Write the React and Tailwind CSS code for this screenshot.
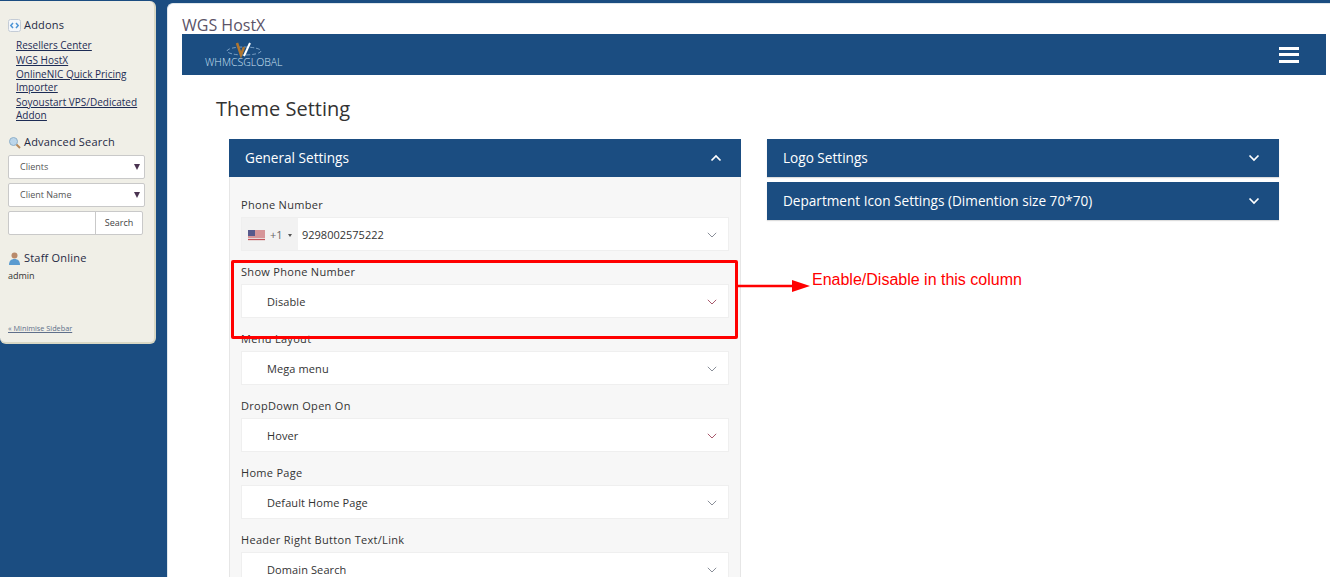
import React from "react";

const font = { fontFamily: '"Open Sans", sans-serif' };

function Chevron({ up, className }) {
  return (
    <svg width="12" height="8" viewBox="0 0 12 8" fill="none" className={className}>
      <path d={up ? "M1.5 6.5 6 2l4.500 4.500" : "M1.500 1.500 6 6l4.500-4.500"} stroke="currentColor" strokeWidth="1.700" />
    </svg>
  );
}

function Field({ label, value, red }) {
  return (
    <div className="flex flex-col shrink-0">
      <div className="h-[33px] flex items-end pb-[4px] text-[11px] leading-[16px] font-normal text-[#333] tracking-[0.3px]">{label}</div>
      <div className="h-[34px] bg-white border border-[#efefef] flex items-center pt-[2px] pl-[25px] pr-[11px] justify-between text-[11px] tracking-[0.1px] text-[#333]">
        <span>{value}</span>
        <svg width="10" height="6" viewBox="0 0 10 6" fill="none" className={red ? "text-[#a8596c]" : "text-[#8a8f99]"}>
          <path d="M.8.8 5 5 9.200.8" stroke="currentColor" strokeWidth="1" />
        </svg>
      </div>
    </div>
  );
}

function Flag() {
  return (
    <svg width="17" height="11" viewBox="0 0 17 11">
      <rect width="17" height="11" fill="#e8d8d8" />
      <path d="M0 1h17M0 3h17M0 5h17M0 7h17M0 9.500h17" stroke="#c4525a" strokeWidth="1" />
      <rect width="7" height="6" fill="#57598c" />
    </svg>
  );
}

function SideHeading({ icon, children }) {
  return (
    <div className="flex items-center gap-[3px] text-[11px] leading-[16px] text-[#1f2a44] font-normal tracking-[0.2px]">
      <span className="w-[13px] h-[13px] flex items-center justify-center shrink-0">{icon}</span>
      <span>{children}</span>
    </div>
  );
}

function SideSelect({ label }) {
  return (
    <div className="h-[24px] w-[137px] bg-white border border-[#c9c9c9] rounded-[2px] flex items-center justify-between pl-[11px] pr-[4px] text-[9px] text-[#555]">
      <span>{label}</span>
      <span className="w-0 h-0 border-l-[3px] border-r-[3px] border-t-[6px] border-l-transparent border-r-transparent border-t-[#4a3350]" />
    </div>
  );
}

export default function App() {
  return (
    <div style={font} className="relative h-[577px] w-[1330px] overflow-hidden bg-[#1b4d81] flex">
      <aside className="w-[167px] shrink-0 pt-[1px]">
        <div className="w-[156px] h-[343px] bg-[#f0efe7] border-r-[2px] border-b-[2px] border-[#d9d8c5] rounded-r-[6px] rounded-b-[6px] pl-[8px] pt-[16px] flex flex-col">
          <SideHeading
            icon={
              <svg width="13" height="13" viewBox="0 0 13 13">
                <rect x=".5" y=".5" width="12" height="12" rx="2" fill="#f4f7fb" stroke="#c4ccd6" />
                <path d="M5 4 2.800 6.500 5 9M8 4l2.200 2.500L8 9" stroke="#4b93d6" strokeWidth="1.500" fill="none" />
              </svg>
            }
          >
            Addons
          </SideHeading>
          <div className="pl-[8px] pt-[6px] text-[10px] leading-[13px] text-[#1d2c55] underline w-[138px] flex flex-col gap-[1px]">
            <a className="mb-[1px]">Resellers Center</a>
            <a>WGS HostX</a>
            <a className="mb-[1px]">OnlineNIC Quick Pricing Importer</a>
            <a>Soyoustart VPS/Dedicated Addon</a>
          </div>
          <div className="mt-[12px]">
            <SideHeading
              icon={
                <svg width="13" height="13" viewBox="0 0 13 13">
                  <circle cx="5.500" cy="5.500" r="4" fill="#bcd6ea" stroke="#8fb0c9" />
                  <path d="M8.500 8.500 12 12" stroke="#b8895a" strokeWidth="2" />
                </svg>
              }
            >
              Advanced Search
            </SideHeading>
          </div>
          <div className="mt-[5px] flex flex-col gap-[4px]">
            <SideSelect label="Clients" />
            <SideSelect label="Client Name" />
            <div className="h-[24px] w-[135px] flex bg-white border border-[#c9c9c9] rounded-[2px]">
              <div className="w-[87px] border-r border-[#c9c9c9]" />
              <div className="flex-1 flex items-center justify-center text-[9px] text-[#444]">Search</div>
            </div>
          </div>
          <div className="mt-[15px]">
            <SideHeading
              icon={
                <svg width="13" height="13" viewBox="0 0 13 13">
                  <circle cx="6.500" cy="3.500" r="3" fill="#b98a6b" />
                  <path d="M1 13c0-4 2-6 5.500-6S12 9 12 13z" fill="#5a9bd0" />
                </svg>
              }
            >
              Staff Online
            </SideHeading>
          </div>
          <div className="mt-[4px] text-[9px] leading-[12px] text-[#333]">admin</div>
          <div className="mt-auto mb-[9px] text-[7.300px] leading-[10px] text-[#5f6f8a] underline">« Minimise Sidebar</div>
        </div>
      </aside>

      <main className="flex-1 mt-[3px] bg-white rounded-tl-[6px] border-l border-t border-[#dfe7ec] pl-[14px] pr-[4px] flex flex-col min-w-0">
        <div className="h-[30px] shrink-0 flex items-end text-[16px] leading-[18px] text-[#5b5367]">WGS HostX</div>
        <div className="h-[41px] bg-[#1b4d81] flex items-center justify-between shrink-0 pl-[23px] pr-[27px]">
          <div className="relative w-[78px] h-[26px]">
            <svg width="78" height="18" viewBox="0 0 78 18" className="absolute left-0 top-0">
              <ellipse cx="39" cy="9" rx="17" ry="4" fill="none" stroke="#9fc0e0" strokeWidth=".7" strokeDasharray="4 2" />
              <path d="M32 1l4 12 3-8" fill="none" stroke="#b0752e" strokeWidth="2.500" />
              <path d="M45 1l-6 13" fill="none" stroke="#ffffff" strokeWidth="2" />
            </svg>
            <div className="absolute left-0 top-[14px] text-[10.500px] leading-[12px] whitespace-nowrap font-light text-[#cfe2f5]">WHMCSGLOBAL</div>
          </div>
          <div className="flex flex-col gap-[3.500px]">
            <span className="block w-[20px] h-[3px] bg-white" />
            <span className="block w-[20px] h-[3px] bg-white" />
            <span className="block w-[20px] h-[3px] bg-white" />
          </div>
        </div>

        <div className="pl-[34px] pt-[19px] h-[64px] shrink-0 text-[20px] leading-[30px] text-[#333]">Theme Setting</div>

        <div className="flex items-start gap-[26px] pl-[47px] shrink-0">
          <section className="w-[512px] shrink-0 bg-[#f7f7f7] border-x border-[#e6e6e6]">
            <div className="h-[38px] bg-[#1b4d81] flex items-center justify-between pl-[16px] pr-[19px] text-white text-[13.600px] -mx-[1px]">
              <span>General Settings</span>
              <Chevron up />
            </div>
            <div className="px-[11px] pb-[10px] pt-[7px] flex flex-col">
              <div className="flex flex-col">
                <div className="h-[33px] flex items-end pb-[4px] text-[11px] leading-[16px] text-[#333] tracking-[0.3px]">Phone Number</div>
                <div className="h-[34px] bg-white border border-[#efefef] flex items-center pr-[11px] justify-between text-[11px] text-[#333]">
                  <div className="flex items-center h-full">
                    <div className="w-[56px] h-full bg-[#f2f2f2] flex items-center pt-[2px] pl-[6px] gap-[5px] text-[#666]">
                      <Flag />
                      <span>+1</span>
                      <span className="w-0 h-0 border-l-[2.500px] border-r-[2.500px] border-t-[3px] border-l-transparent border-r-transparent border-t-[#555]" />
                    </div>
                    <span className="pl-[4px] pt-[2px]">9298002575222</span>
                  </div>
                  <svg width="10" height="6" viewBox="0 0 10 6" fill="none" className="text-[#8a8f99] mt-[2px]">
                    <path d="M.8.8 5 5 9.200.8" stroke="currentColor" strokeWidth="1" />
                  </svg>
                </div>
              </div>
              <Field label="Show Phone Number" value="Disable" red />
              <Field label="Menu Layout" value="Mega menu" />
              <Field label="DropDown Open On" value="Hover" red />
              <Field label="Home Page" value="Default Home Page" />
              <Field label="Header Right Button Text/Link" value="Domain Search" />
            </div>
          </section>
          <section className="w-[512px] shrink-0 flex flex-col gap-[5px]">
            <div className="h-[38px] bg-[#1b4d81] shadow-[0_1px_1px_#ddd] flex items-center justify-between pl-[16px] pr-[19px] text-white text-[13.600px]">
              <span>Logo Settings</span>
              <Chevron />
            </div>
            <div className="h-[38px] bg-[#1b4d81] shadow-[0_1px_1px_#ddd] flex items-center justify-between pl-[16px] pr-[19px] text-white text-[13.600px]">
              <span>Department Icon Settings (Dimention size 70*70)</span>
              <Chevron />
            </div>
          </section>
        </div>
      </main>

      {/* annotation drawn over the page */}
      <div className="absolute left-[231px] top-[260px] w-[507px] h-[79px] border-[3px] border-[#ff0000] rounded-[2px]" />
      <svg width="74" height="14" viewBox="0 0 74 14" className="absolute left-[737px] top-[279px]">
        <path d="M0 7h56" stroke="#ff0000" strokeWidth="2.500" />
        <path d="M55 1l18 6-18 6z" fill="#ff0000" />
      </svg>
      <div className="absolute left-[812px] top-[271px] text-[16px] leading-[18px] text-[#ff0000] whitespace-nowrap" style={{ fontFamily: '"Liberation Sans", sans-serif' }}>
        Enable/Disable in this column
      </div>
    </div>
  );
}
